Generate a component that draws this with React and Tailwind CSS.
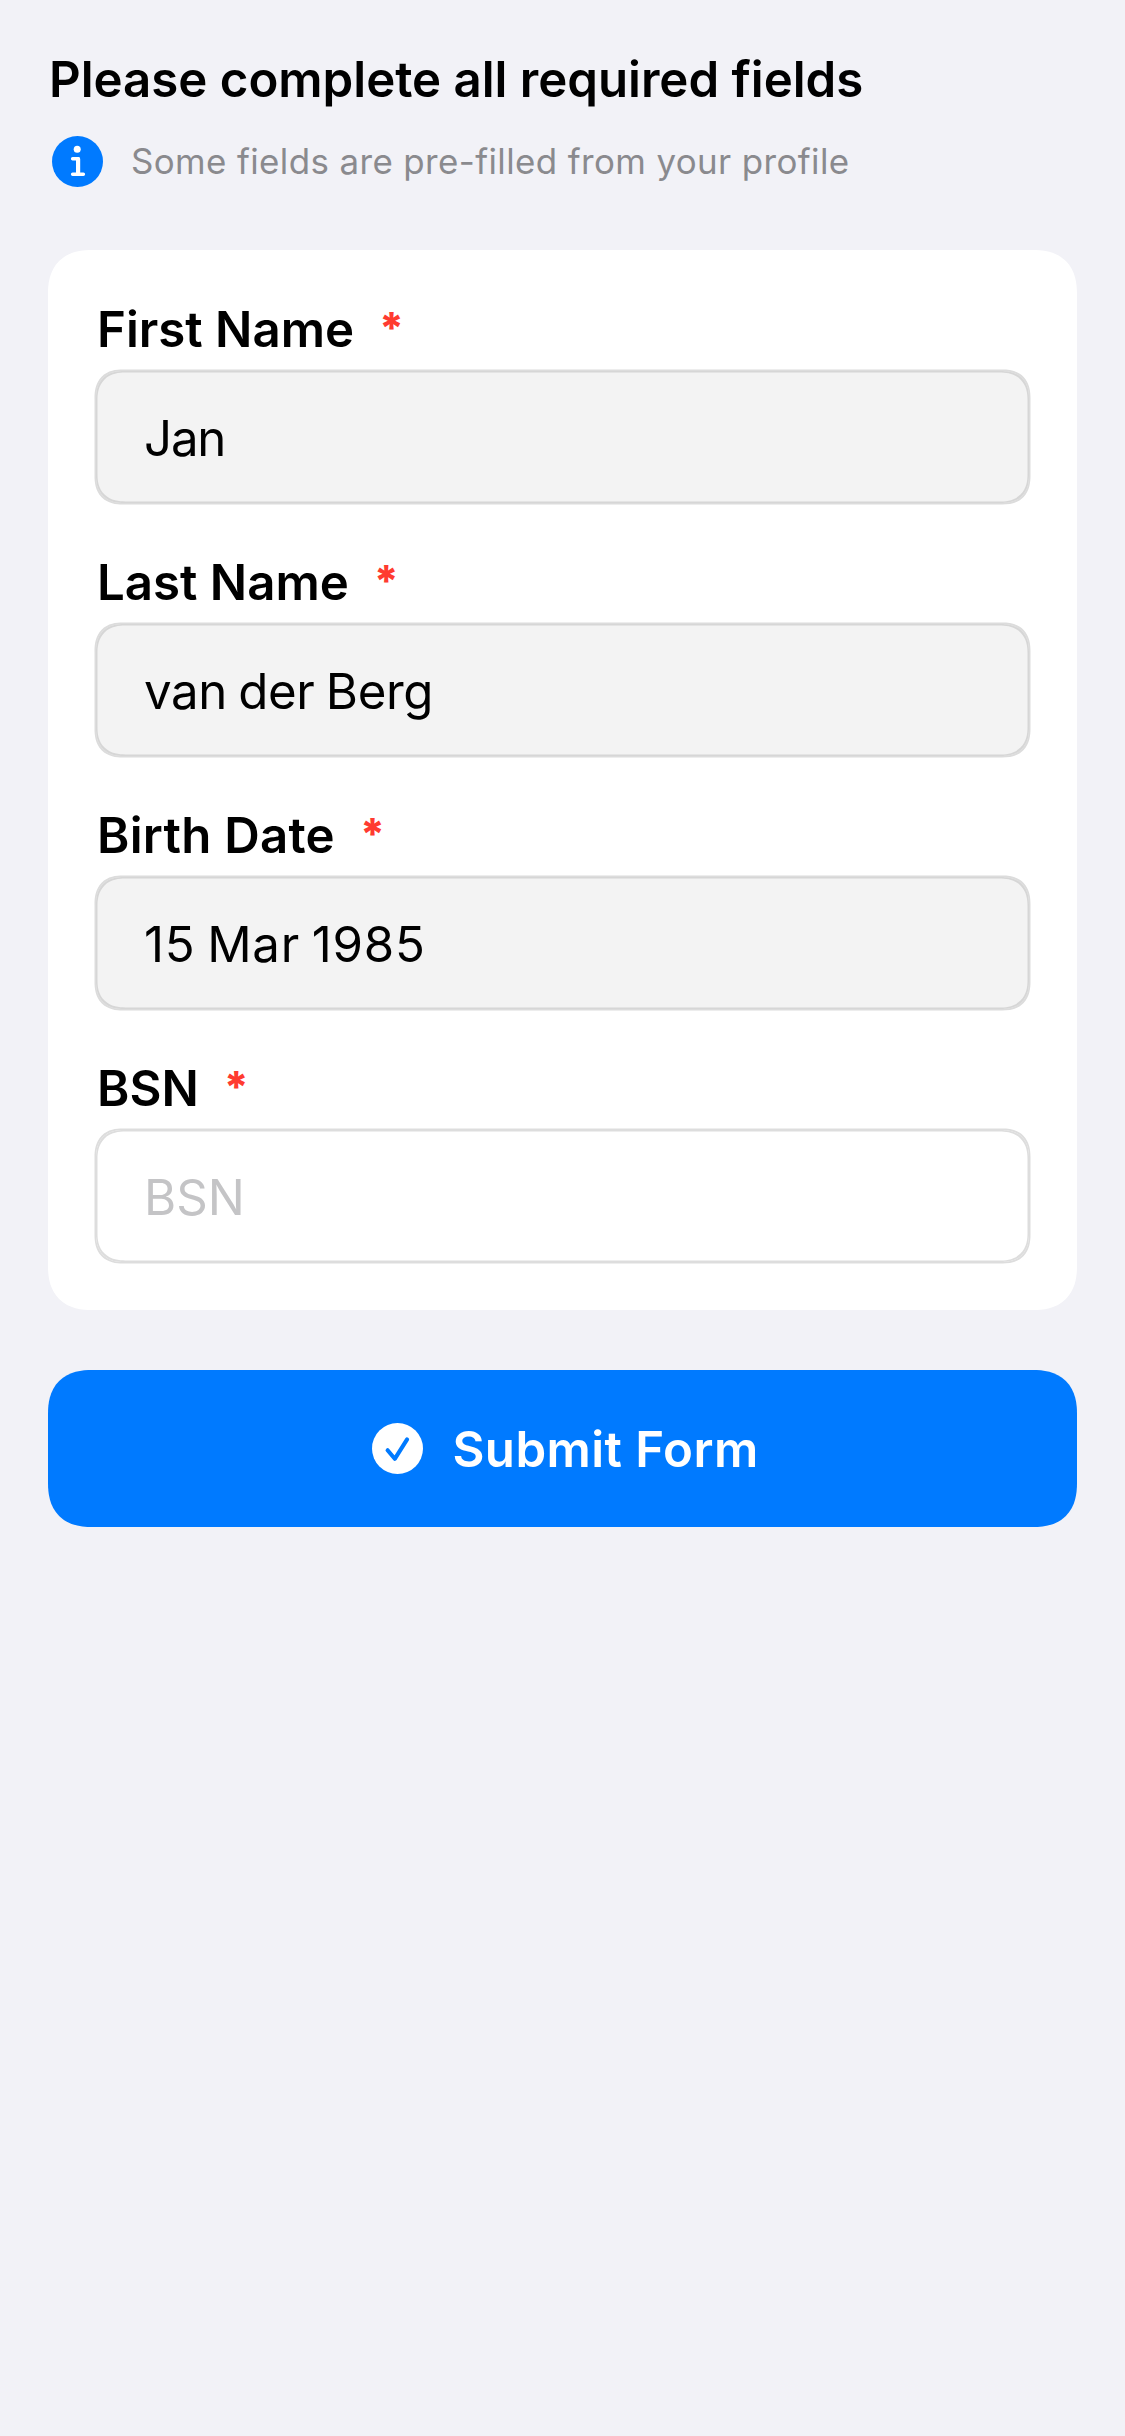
const fields = [
  { label: "First Name", value: "Jan", tracking: "tracking-[-1.2px]", prefilled: true },
  { label: "Last Name", value: "van der Berg", tracking: "tracking-[-0.4px] [word-spacing:-2px]", prefilled: true },
  { label: "Birth Date", value: "15 Mar 1985", tracking: "tracking-[0.8px] [word-spacing:-3px]", labelTracking: "tracking-[0.25px]", prefilled: true },
  { label: "BSN", placeholder: "BSN", prefilled: false },
];

function InfoIcon() {
  return (
    <svg className="size-[51px] shrink-0" viewBox="0 0 51 51" fill="none" aria-hidden="true">
      <circle cx="25.5" cy="25.5" r="25.5" fill="#007aff" />
      <circle cx="25.2" cy="13.2" r="3.5" fill="#fff" />
      <path d="M20.6 22.7h5.6M20.6 38.3h10.8" stroke="#fff" strokeWidth="3.4" strokeLinecap="round" />
      <path d="M24 21h2.2a2 2 0 0 1 2 2v15.3H24z" fill="#fff" />
    </svg>
  );
}

function CheckIcon() {
  return (
    <svg className="size-[51px] shrink-0" viewBox="0 0 51 51" fill="none" aria-hidden="true">
      <circle cx="25.5" cy="25.5" r="25.5" fill="#fff" />
      <path d="M15.6 27.2l7.2 8.6 12.3-19.4" stroke="#007aff" strokeWidth="4.1" strokeLinecap="round" strokeLinejoin="round" />
    </svg>
  );
}

function Field({ label, value, placeholder, tracking = "", labelTracking = "", prefilled }) {
  return (
    <div>
      <div className="flex h-[62px] gap-[25px] pl-px text-[49.2px] leading-[62px] font-semibold">
        <span className={labelTracking}>{label}</span>
        <span className="text-[43px] leading-[59px] font-extrabold text-[#ff3b30]">*</span>
      </div>
      <div
        className={
          "mt-[11px] flex h-[132px] items-center rounded-[28px] px-[48px] pt-[2px] text-[49.2px] leading-[62px] [corner-shape:superellipse(1.25)] " +
          (prefilled
            ? "bg-[#f3f3f3] shadow-[0_0_0_1.5px_#dcdcdc,inset_0_0_0_1.5px_#d6d6d6]"
            : "bg-white shadow-[0_0_0_1.5px_#dddddd,inset_0_0_0_1.5px_#dddddd]")
        }
      >
        {value ? <span className={tracking}>{value}</span> : <span className="text-[#c4c4c6]">{placeholder}</span>}
      </div>
    </div>
  );
}

export default function App() {
  return (
    <main className="min-h-screen bg-[#f2f2f7] px-[48px] pt-[48px] font-['Inter',sans-serif] text-black">
      <h1 className="pl-px text-[49.2px] leading-[62px] font-semibold tracking-[-0.02px] whitespace-nowrap">
        Please complete all required fields
      </h1>
      <div className="mt-[26px] flex h-[51px] items-center gap-[28px] pl-[4px]">
        <InfoIcon />
        <p className="pb-[2px] text-[34.9px] leading-[48px] tracking-[0.39px] whitespace-nowrap text-[#8a8a8e]">
          Some fields are pre-filled from your profile
        </p>
      </div>
      <section className="mt-[63px] flex flex-col gap-[48px] rounded-[44px] bg-white p-[48px] [corner-shape:superellipse(1.25)]">
        {fields.map((field) => (
          <Field key={field.label} {...field} />
        ))}
      </section>
      <button
        type="button"
        className="mt-[60px] flex h-[157px] w-full items-center justify-center gap-[29px] rounded-[44px] bg-[#007aff] pl-[6px] text-white [corner-shape:superellipse(1.25)]"
      >
        <CheckIcon />
        <span className="text-[49.2px] leading-[62px] font-semibold tracking-[0.45px]">Submit Form</span>
      </button>
    </main>
  );
}
